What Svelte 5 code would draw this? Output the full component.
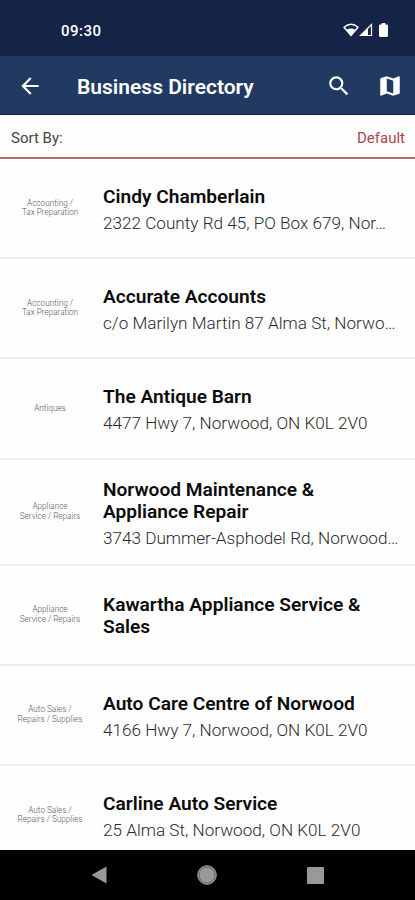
<script lang="ts">
    interface Business {
        category: string[];
        name: string;
        address?: string;
    }

    const businesses: Business[] = [
        { category: ['Accounting /', 'Tax Preparation'], name: 'Cindy Chamberlain', address: '2322 County Rd 45, PO Box 679, Nor…' },
        { category: ['Accounting /', 'Tax Preparation'], name: 'Accurate Accounts', address: 'c/o Marilyn Martin 87 Alma St, Norwo…' },
        { category: ['Antiques'], name: 'The Antique Barn', address: '4477 Hwy 7, Norwood, ON K0L 2V0' },
        { category: ['Appliance', 'Service / Repairs'], name: 'Norwood Maintenance & Appliance Repair', address: '3743 Dummer-Asphodel Rd, Norwood…' },
        { category: ['Appliance', 'Service / Repairs'], name: 'Kawartha Appliance Service & Sales' },
        { category: ['Auto Sales /', 'Repairs / Supplies'], name: 'Auto Care Centre of Norwood', address: '4166 Hwy 7, Norwood, ON K0L 2V0' },
        { category: ['Auto Sales /', 'Repairs / Supplies'], name: 'Carline Auto Service', address: '25 Alma St, Norwood, ON K0L 2V0' }
    ];

    let sortBy = $state('Default');
</script>

<div class="screen">
    <div class="status-bar">
        <span class="clock">09:30</span>
        <div class="status-icons">
            <svg width="16" height="14" viewBox="0 0 16 14">
                <path d="M1 4.2Q8-1.6 15 4.2L8 12.6Z" fill="none" stroke="#fff" stroke-width="1.4" stroke-linejoin="round" />
                <path d="M3.8 6.4Q8 4.4 12.2 6.4L8 12.8Z" fill="#fff" />
            </svg>
            <svg width="14" height="14" viewBox="0 0 14 14">
                <path d="M1.5 12.5H12.5V1.5Z" fill="none" stroke="#fff" stroke-width="1.2" />
                <path d="M1 13L9 5V13Z" fill="#fff" />
            </svg>
            <svg class="battery" width="9" height="14" viewBox="0 0 9 14">
                <path d="M2.7 0H6.3V1.4H7.8Q9 1.4 9 2.6V12.6Q9 14 7.8 14H1.2Q0 14 0 12.6V2.6Q0 1.4 1.2 1.4H2.7Z" fill="#fff" />
            </svg>
        </div>
    </div>

    <header class="app-bar">
        <button class="back" aria-label="Back">
            <svg width="26" height="26" viewBox="0 0 24 24">
                <path d="M20 11H7.83l5.59-5.59L12 4l-8 8 8 8 1.41-1.41L7.83 13H20v-2z" />
            </svg>
        </button>
        <h1>Business Directory</h1>
        <button class="search" aria-label="Search">
            <svg width="26" height="26" viewBox="0 0 24 24">
                <path d="M15.5 14h-.79l-.28-.27A6.47 6.47 0 0 0 16 9.5 6.5 6.5 0 1 0 9.5 16c1.61 0 3.09-.59 4.23-1.57l.27.28v.79l5 4.99L20.49 19l-4.99-5zm-6 0C7.01 14 5 11.99 5 9.5S7.01 5 9.5 5 14 7.01 14 9.5 11.99 14 9.5 14z" />
            </svg>
        </button>
        <button class="map" aria-label="Map">
            <svg width="26" height="26" viewBox="0 0 24 24">
                <path d="M20.5 3l-.16.03L15 5.1 9 3 3.36 4.9c-.21.07-.36.25-.36.48V20.5c0 .28.22.5.5.5l.16-.03L9 18.9l6 2.1 5.64-1.9c.21-.07.36-.25.36-.48V3.5c0-.28-.22-.5-.5-.5zM15 19l-6-2.11V5l6 2.11V19z" />
            </svg>
        </button>
    </header>

    <div class="sort-bar">
        <span>Sort By:</span>
        <span class="sort-value">{sortBy}</span>
    </div>

    <main class="list">
        {#each businesses as business}
            <div class="row">
                <div class="category">
                    {#each business.category as line}
                        <div>{line}</div>
                    {/each}
                </div>
                <div class="details" class:name-only={!business.address}>
                    <div class="name">{business.name}</div>
                    {#if business.address}
                        <div class="address">{business.address}</div>
                    {/if}
                </div>
            </div>
        {/each}
    </main>

    <nav class="nav-bar">
        <svg width="16" height="20" viewBox="0 0 16 20">
            <path d="M15.5 1.5V18.5L0.5 10Z" fill="#999" />
        </svg>
        <svg width="20" height="20" viewBox="0 0 20 20">
            <circle cx="10" cy="10" r="9.3" fill="#8f8f8f" stroke="#999" />
            <circle cx="10" cy="10" r="8" fill="#999" stroke="#5c5c5c" stroke-width="0.8" />
        </svg>
        <svg width="17" height="17" viewBox="0 0 17 17">
            <rect width="17" height="17" rx="1" fill="#999" />
        </svg>
    </nav>
</div>

<style>
    :global(body) {
        margin: 0;
        overflow: hidden;
    }

    .screen {
        display: flex;
        flex-direction: column;
        width: 415px;
        height: 900px;
        overflow: hidden;
        background: #fefefe;
        font-family: Roboto, sans-serif;
    }

    .status-bar {
        display: flex;
        flex: 0 0 56px;
        align-items: center;
        justify-content: space-between;
        box-sizing: border-box;
        padding: 4px 27px 0 61px;
        background: #152446;
        color: #fff;
    }

    .clock {
        padding-top: 1px;
        font-size: 15px;
        font-weight: 500;
        letter-spacing: 0.5px;
    }

    .status-icons {
        display: flex;
        align-items: center;
        margin-top: -1px;
    }

    .status-icons .battery {
        margin-left: 6px;
    }

    .app-bar {
        display: flex;
        flex: 0 0 59px;
        align-items: center;
        box-sizing: border-box;
        padding: 2px 12px 0 17px;
        border-bottom: 1px solid #152446;
        background: #213a61;
        color: #fff;
    }

    h1 {
        flex: 1;
        margin: 2px 0 0 34px;
        font-size: 21px;
        font-weight: 600;
    }

    button {
        display: block;
        padding: 0;
        border: 0;
        background: none;
    }

    button svg {
        display: block;
        fill: #fff;
    }

    .map {
        margin-left: 25px;
    }

    .sort-bar {
        display: flex;
        flex: 0 0 44px;
        align-items: center;
        justify-content: space-between;
        box-sizing: border-box;
        padding: 3px 10px 0 11px;
        border-bottom: 2px solid #b96c70;
        color: #444;
        font-size: 15px;
    }

    .sort-value {
        color: #a8474c;
    }

    .list {
        flex: 1;
        min-height: 0;
        overflow: hidden;
    }

    .row {
        display: flex;
        align-items: center;
        box-sizing: border-box;
        min-height: 100.2px;
        padding: 16px 16px 16px 0;
        border-bottom: 2px solid #eeeef0;
    }

    .category {
        flex: 0 0 100px;
        margin-right: 3px;
        color: #55586c;
        font-size: 8.2px;
        font-weight: 300;
        line-height: 9.5px;
        text-align: center;
    }

    .details {
        flex: 1;
        min-width: 0;
        padding-top: 3px;
        margin-bottom: -1px;
    }

    .details.name-only {
        padding-top: 1px;
    }

    .name {
        color: #0c0c0c;
        font-size: 19.15px;
        font-weight: 600;
        line-height: 22px;
    }

    .address {
        margin-top: 4px;
        color: #2a2a2a;
        font-size: 17.15px;
        font-weight: 350;
        line-height: 22px;
        white-space: nowrap;
    }

    .nav-bar {
        display: flex;
        flex: 0 0 50px;
        align-items: center;
        justify-content: space-between;
        box-sizing: border-box;
        padding: 0 91px 0 91px;
        background: #000;
    }
</style>
